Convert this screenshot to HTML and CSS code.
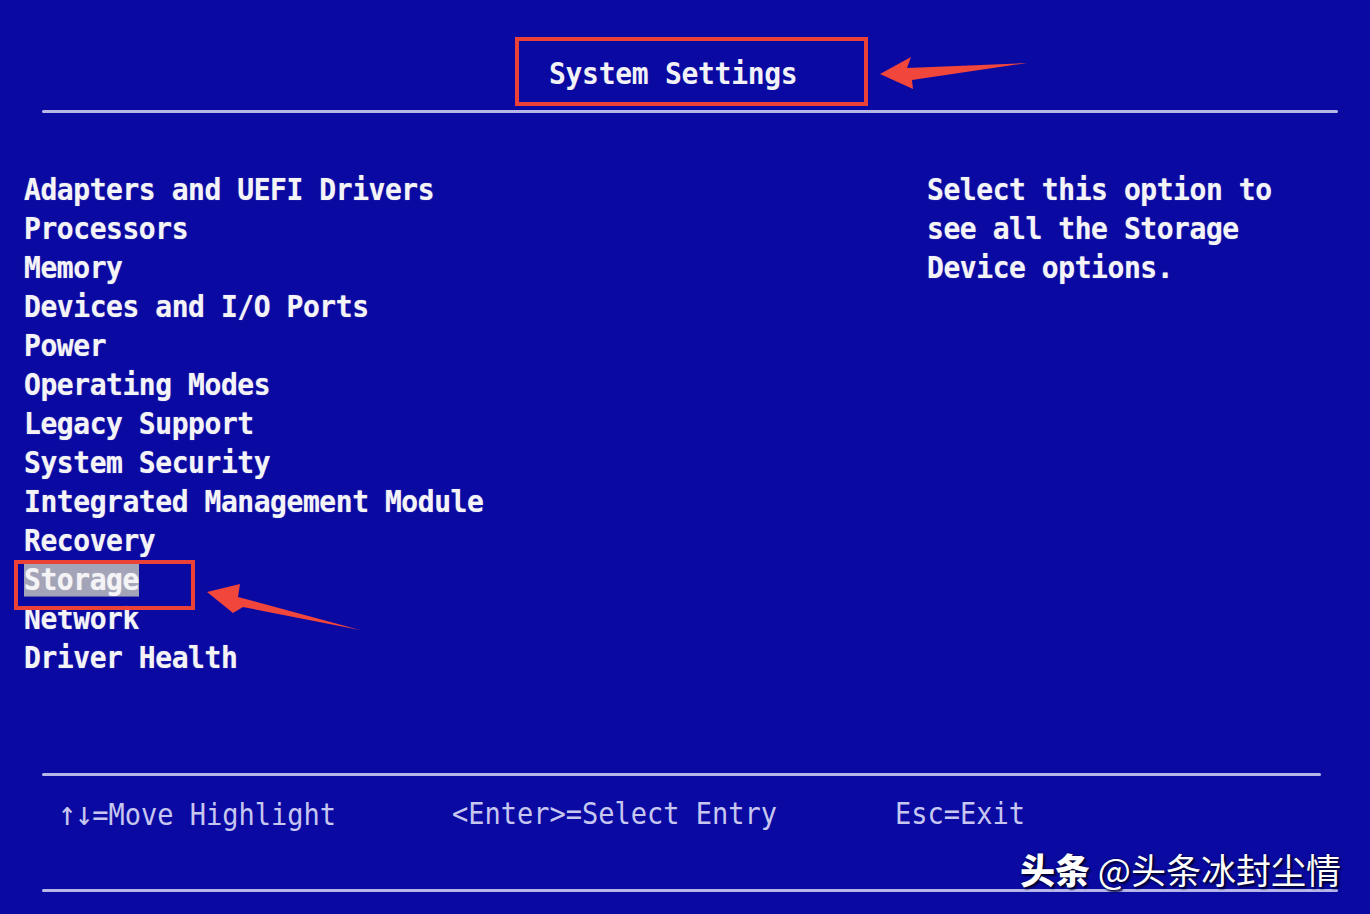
FILE: index.html
```html
<html>
<head><title>System Settings</title>
<link rel="stylesheet" href="styles.css">
</head>
<body>

<div class="screen">

<div class="header">
    <div class="title-box"><span class="title">System Settings</span></div>
</div>
<div class="rule top-rule"></div>

<div class="main">
    <div class="menu">
        <div class="item">Adapters and UEFI Drivers</div>
        <div class="item">Processors</div>
        <div class="item">Memory</div>
        <div class="item">Devices and I/O Ports</div>
        <div class="item">Power</div>
        <div class="item">Operating Modes</div>
        <div class="item">Legacy Support</div>
        <div class="item">System Security</div>
        <div class="item">Integrated Management Module</div>
        <div class="item">Recovery</div>
        <div class="item"><span class="selected">Storage</span></div>
        <div class="item">Network</div>
        <div class="item">Driver Health</div>
    </div>
    <div class="help">
        <div class="item">Select this option to</div>
        <div class="item">see all the Storage</div>
        <div class="item">Device options.</div>
    </div>
</div>

<div class="rule mid-rule"></div>

<div class="keys">
    <span class="key first"><span class="arrows">↑↓</span>=Move Highlight</span>
    <span class="key second">&lt;Enter&gt;=Select Entry</span>
    <span class="key">Esc=Exit</span>
</div>

<div class="rule bottom-rule"></div>

<!-- annotations drawn over the screenshot -->
<svg class="marks" width="1370" height="914" viewBox="0 0 1370 914">
    <rect x="16" y="562" width="177" height="46" fill="none" stroke="#ec4136" stroke-width="4"/>
    <polygon fill="#f0463b" points="880,74 911,57 907,68 1027,63 912,80 913,89"/>
    <polygon fill="#f0463b" points="207,592 240,584 238,597 360,630 243,607 233,613"/>
</svg>

<div class="watermark"><b>头条</b> @头条冰封尘情</div>

</div>
</body>
</html>
```

FILE: styles.css
```css
html, body {
  margin: 0;
  padding: 0;
}

body {
  background: #0a0a9c;
  font-family: "DejaVu Sans Mono", monospace;
}

.screen {
  position: relative;
  width: 1370px;
  height: 914px;
  overflow: hidden;
  background: radial-gradient(120% 120% ellipse at center, #0a0aa2 60%, #07078a 100%);
}

.header {
  padding: 37px 0 0 515px;
}

.title-box {
  box-sizing: border-box;
  width: 353px;
  height: 69px;
  border: 4px solid #ec4136;
  padding: 3px 0 0 30px;
  display: flex;
  align-items: center;
}

.title {
  color: #f2f2f6;
  font-weight: bold;
  font-size: 28px;
  letter-spacing: -0.3px;
  white-space: pre;
  display: inline-block;
  transform: scaleY(1.1);
}

.rule {
  height: 3px;
  margin-left: 42px;
  background: #b6b6e8;
  border-radius: 2px;
}

.top-rule {
  margin-top: 4px;
  width: 1296px;
}

.main {
  display: flex;
  padding: 57px 0 0 24px;
}

.menu {
  width: 903px;
}

.item {
  color: #f4f4f6;
  font-weight: bold;
  font-size: 28px;
  letter-spacing: -0.45px;
  line-height: 39px;
  height: 39px;
  white-space: pre;
  transform: scaleY(1.1);
  text-shadow: 0 0 1px rgba(255, 255, 255, 0.5);
}

.selected {
  display: inline-block;
  vertical-align: top;
  margin-top: 4.5px;
  line-height: 30px;
  background: #a4a4b8;
}

.mid-rule {
  margin-top: 96px;
  width: 1279px;
}

.keys {
  display: flex;
  padding: 18px 0 0 58px;
  height: 39px;
  line-height: 39px;
}

.key {
  color: #c6c6f0;
  font-size: 27px;
  white-space: pre;
  display: inline-block;
  transform: scaleY(1.12);
}

.arrows {
  font-size: 30px;
  letter-spacing: -1px;
}

.first {
  width: 394px;
}

.second {
  width: 443px;
}

.bottom-rule {
  margin-top: 56px;
  width: 1296px;
}

/* overlay annotations */
.marks {
  position: absolute;
  left: 0;
  top: 0;
}

.watermark {
  position: absolute;
  left: 1020px;
  top: 845px;
  color: #ffffff;
  font-family: "Noto Sans CJK SC", sans-serif;
  font-size: 35px;
  line-height: 48px;
  white-space: pre;
  text-shadow: 2px 2px 2px #000030, 0 0 2px #000030;
}

.watermark b {
  font-weight: 900;
}
```
